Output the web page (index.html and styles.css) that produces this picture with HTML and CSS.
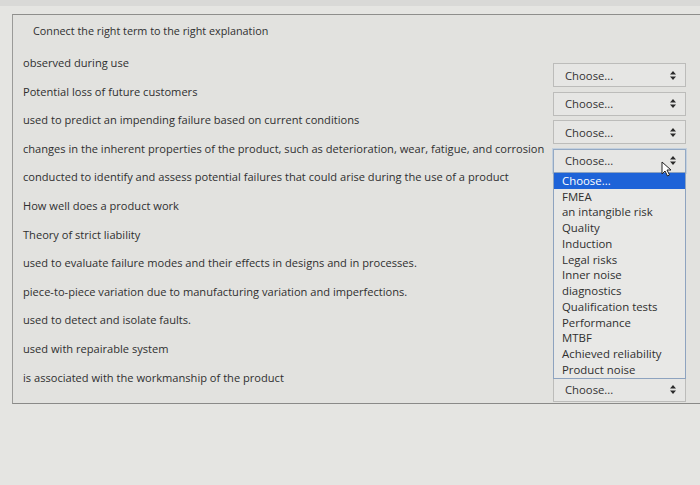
FILE: index.html
```html
<!DOCTYPE html>
<html lang="en">
<head>
<meta charset="utf-8">
<title>Match question</title>
<link rel="stylesheet" href="styles.css">
</head>
<body>
<div class="top-strip"></div>
<div class="panel">
  <div class="title">Connect the right term to the right explanation</div>
  <div class="rows">
    <div class="row"><span class="term">observed during use</span><div class="select"><span>Choose...</span><svg class="arrows" width="6" height="9" viewBox="0 0 6 9"><path d="M3 0L6 3.5H0Z M3 9L6 5.5H0Z"/></svg></div></div>
    <div class="row"><span class="term">Potential loss of future customers</span><div class="select"><span>Choose...</span><svg class="arrows" width="6" height="9" viewBox="0 0 6 9"><path d="M3 0L6 3.5H0Z M3 9L6 5.5H0Z"/></svg></div></div>
    <div class="row"><span class="term">used to predict an impending failure based on current conditions</span><div class="select"><span>Choose...</span><svg class="arrows" width="6" height="9" viewBox="0 0 6 9"><path d="M3 0L6 3.5H0Z M3 9L6 5.5H0Z"/></svg></div></div>
    <div class="row"><span class="term">changes in the inherent properties of the product, such as deterioration, wear, fatigue, and corrosion</span><div class="select focused"><span>Choose...</span><svg class="arrows" width="6" height="9" viewBox="0 0 6 9"><path d="M3 0L6 3.5H0Z M3 9L6 5.5H0Z"/></svg>
        <ul class="options">
          <li class="hl">Choose...</li>
          <li>FMEA</li>
          <li>an intangible risk</li>
          <li>Quality</li>
          <li>Induction</li>
          <li>Legal risks</li>
          <li>Inner noise</li>
          <li>diagnostics</li>
          <li>Qualification tests</li>
          <li>Performance</li>
          <li>MTBF</li>
          <li>Achieved reliability</li>
          <li>Product noise</li>
        </ul>
        <svg class="cursor" width="11" height="16" viewBox="0 0 11 16"><path d="M1 1V13L4 10L6.5 15L8.5 14L6 9H10Z" fill="#fff" stroke="#222" stroke-width="1"/></svg>
      </div></div>
    <div class="row"><span class="term">conducted to identify and assess potential failures that could arise during the use of a product</span><div class="select covered"></div></div>
    <div class="row"><span class="term">How well does a product work</span><div class="select covered"></div></div>
    <div class="row"><span class="term">Theory of strict liability</span><div class="select covered"></div></div>
    <div class="row"><span class="term">used to evaluate failure modes and their effects in designs and in processes.</span><div class="select covered"></div></div>
    <div class="row"><span class="term">piece-to-piece variation due to manufacturing variation and imperfections.</span><div class="select covered"></div></div>
    <div class="row"><span class="term">used to detect and isolate faults.</span><div class="select covered"></div></div>
    <div class="row"><span class="term">used with repairable system</span><div class="select covered"></div></div>
    <div class="row"><span class="term">is associated with the workmanship of the product</span><div class="select"><span>Choose...</span><svg class="arrows" width="6" height="9" viewBox="0 0 6 9"><path d="M3 0L6 3.5H0Z M3 9L6 5.5H0Z"/></svg></div></div>
  </div>
</div>
</body>
</html>
```

FILE: styles.css
```css
html, body {
  margin: 0;
  padding: 0;
}
body {
  width: 700px;
  height: 485px;
  overflow: hidden;
  background: #e5e5e2;
  font-family: "Open Sans", "Liberation Sans", sans-serif;
  color: #333;
}
.top-strip {
  height: 6px;
  background: #d9d9d7;
}
.panel {
  margin-top: 8px;
  margin-left: 12px;
  border-top: 1px solid #8e8e8c;
  border-left: 1px solid #9a9a98;
  border-bottom: 1px solid #8a8a88;
  background: #e2e2df;
  padding: 9px 14px 4px 10px;
}
.title {
  font-size: 10.8px;
  line-height: 14px;
  padding-left: 10px;
  color: #2f2f2f;
}
.rows {
  margin-top: 18px;
}
.row {
  display: flex;
  justify-content: space-between;
  align-items: flex-start;
  height: 28.6px;
}
.term {
  font-size: 11.1px;
  line-height: 14px;
  white-space: nowrap;
  color: #2f2f2f;
}
.select {
  position: relative;
  margin-top: 7px;
  width: 133px;
  height: 24px;
  box-sizing: border-box;
  border: 1px solid #bcbcba;
  background: #e6e6e4;
  display: flex;
  align-items: center;
  justify-content: space-between;
  padding: 0 9px 0 11px;
  font-size: 11.3px;
  color: #333;
  flex-shrink: 0;
}
.select.focused {
  border: 1px solid #93a9c4;
  box-shadow: 0 0 0 1px #c3d0de;
}
.arrows path {
  fill: #2a2a2a;
}
.options {
  position: absolute;
  top: 100%;
  left: -1px;
  right: -1px;
  margin: 0;
  padding: 0;
  list-style: none;
  background: #e8e8e6;
  border: 1px solid #8ea3bf;
  box-sizing: border-box;
  z-index: 2;
}
.options li {
  height: 15.75px;
  line-height: 15.75px;
  padding-left: 8px;
  font-size: 11.4px;
  color: #2f2f2f;
  white-space: nowrap;
}
.options li.hl {
  background: #1e63d8;
  color: #fff;
}
.cursor {
  position: absolute;
  left: 107px;
  top: 11px;
  z-index: 3;
}
```
